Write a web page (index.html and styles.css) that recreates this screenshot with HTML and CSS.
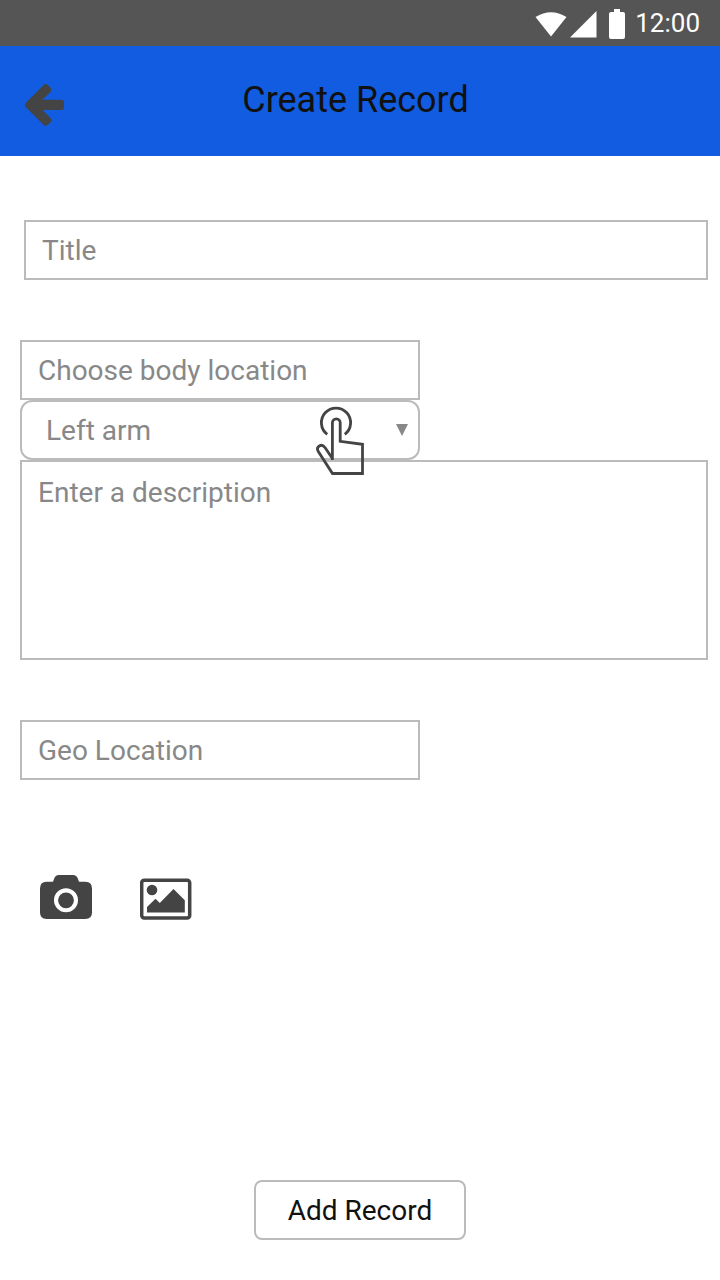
FILE: index.html
```html
<!DOCTYPE html>
<html lang="en">
<head>
<meta charset="utf-8">
<title>Create Record</title>
<link rel="stylesheet" href="styles.css">
</head>
<body>
<div class="screen">
  <div class="status-bar">
    <svg class="status-icons" width="92" height="46" viewBox="534 0 92 46" fill="#fff">
      <path d="M535.5 17Q551 7.500 566.500 17L551 36.500Z"/>
      <path d="M570 37.500L596.500 11V37.500Z"/>
      <path d="M614 9H620V12H623Q625 12 625 14V37Q625 39 623 39H611Q609 39 609 37V14Q609 12 611 12H614Z"/>
    </svg>
    <span class="clock">12:00</span>
  </div>
  <header class="app-bar">
    <svg class="back" width="44" height="48" viewBox="22 80 44 48" fill="#444">
      <path d="M25.900 102.700L43.400 85.200Q45.700 82.900 48 85.200L50.400 87.500Q52.600 89.800 50.400 92L42.500 99.700H61.200Q64 99.700 64 102.500V107.300Q64 110 61.200 110H42.500L50.400 117.900Q52.600 120.200 50.400 122.500L48 124.700Q45.700 126.800 43.400 124.700L25.900 107.200Q23.700 105 25.900 102.700Z"/>
    </svg>
    <h1 class="title">Create Record</h1>
  </header>
  <main class="form">
    <div class="field field-title">Title</div>
    <div class="field field-short">Choose body location</div>
    <div class="select">
      <span class="value">Left arm</span>
      <svg width="12" height="12" viewBox="0 0 12 12" fill="#888"><path d="M0 0H12L6 12Z"/></svg>
      <svg class="tap" width="52" height="72" viewBox="314 405 52 72" fill="none" stroke="#444" stroke-width="2.800">
        <path d="M327.200 434.300A14.600 14.600 0 1 1 344.800 434.300"/>
        <path d="M332.400 460V422.700A3.900 3.900 0 0 1 340.200 422.700V441.300L362.500 444.300V473.500H332.500L318.300 451.500C315.500 446.500 321.500 443 325 447.500L332.400 458.500"/>
      </svg>
    </div>
    <div class="field field-description">Enter a description</div>
    <div class="field field-short field-geo">Geo Location</div>
    <div class="media">
      <svg width="52" height="46" viewBox="40 874 52 46" fill="#444">
        <path fill-rule="evenodd" d="M46.500 881.800H53L54.500 877.700Q55.500 875 58.500 875H73.500Q76.500 875 77.500 877.700L79 881.800H85.500Q92 881.800 92 888.300V912.500Q92 919 85.500 919H46.500Q40 919 40 912.500V888.300Q40 881.800 46.500 881.800ZM66 888.300A12 12 0 1 0 66 912.300A12 12 0 1 0 66 888.300Z"/>
        <circle cx="66" cy="900.300" r="7.900"/>
      </svg>
      <svg width="52" height="46" viewBox="140 874 52 46" fill="#444">
        <rect x="141.700" y="880.200" width="48" height="37.700" rx="2.500" fill="none" stroke="#444" stroke-width="3.500"/>
        <circle cx="152" cy="890" r="5.300"/>
        <path d="M147 912.500V907L155.500 898.700L159.800 903L173.500 889L184.800 900.300V912.500Z"/>
      </svg>
    </div>
    <button class="add" type="button">Add Record</button>
  </main>
</div>
</body>
</html>
```

FILE: styles.css
```css
* { box-sizing: border-box; }
body { margin: 0; background: #fff; font-family: Roboto, sans-serif; }
.screen { display: flex; flex-direction: column; width: 720px; height: 1280px; overflow: hidden; }
.status-bar {
  display: flex; justify-content: flex-end; align-items: center;
  height: 46px; padding-right: 20px; background: #555;
}
.clock { margin-left: 9px; font-size: 26px; line-height: 46px; color: #fff; }
.app-bar {
  display: grid; grid-template-columns: 44px 1fr 44px; align-items: center;
  height: 110px; padding: 0 26px 0 22px; background: #115ce0;
}
.back { margin-top: 6px; }
.title { margin: 0; padding: 0 5px 2px 0; font-size: 36px; font-weight: 400; line-height: 106px; text-align: center; color: #111; }
.form { display: flex; flex-direction: column; flex: 1; padding: 64px 12px 40px 20px; }
.field, .select { height: 60px; border: 2px solid #bbb; font-size: 28px; line-height: 56px; color: #888; }
.field { padding: 1px 16px 0; }
.field-title { margin: 0 0 60px 4px; }
.field-short { width: 400px; }
.select {
  position: relative; display: flex; justify-content: space-between; align-items: center;
  width: 400px; padding: 0 10px 0 24px; border-radius: 12px;
}
.value { padding-top: 2px; }
.tap { position: absolute; left: 292px; top: 3px; z-index: 1; }
.field-description { height: 200px; padding-top: 3px; }
.field-geo { margin-top: 60px; }
.media { display: flex; gap: 48px; height: 46px; margin: 94px 0 0 20px; }
.add {
  width: 212px; height: 60px; margin: auto 0 0 234px; padding: 2px 0 0;
  border: 2px solid #bbb; border-radius: 8px; background: #fff;
  font: 28px/54px Roboto, sans-serif; color: #111;
}
```
